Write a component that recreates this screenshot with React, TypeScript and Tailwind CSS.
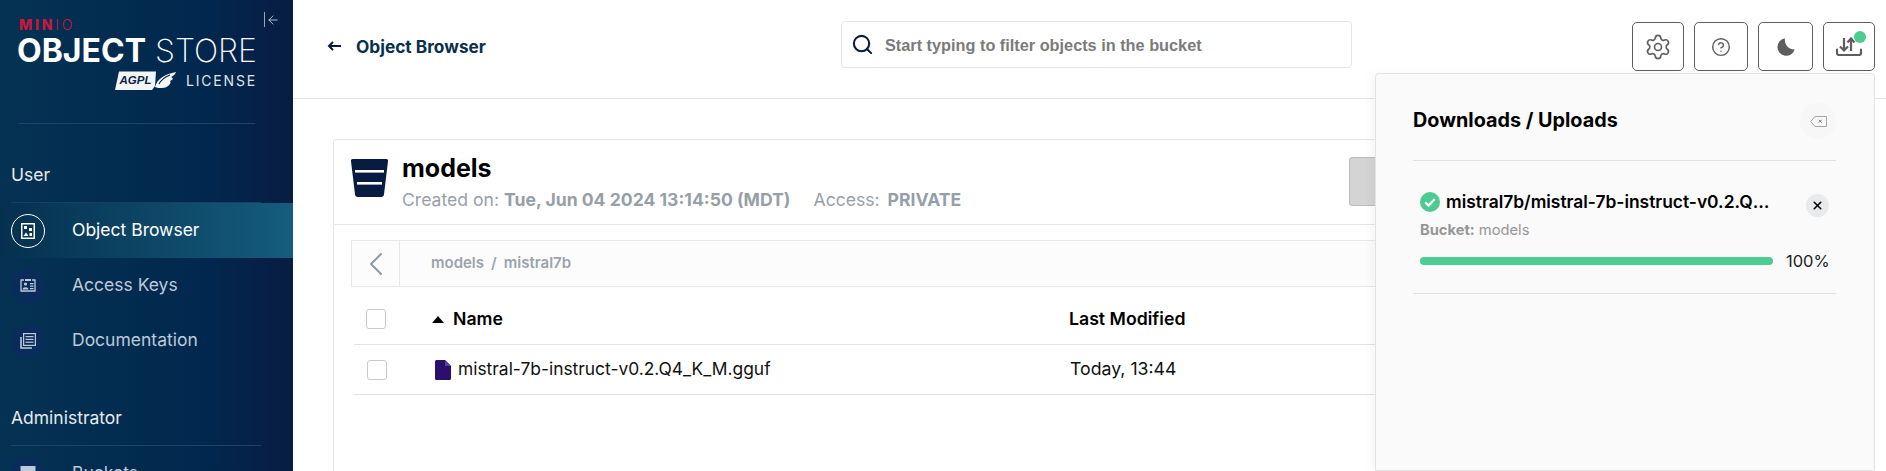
import { ChevronLeft, CircleHelp, ArrowLeft, Search, Settings, X } from "lucide-react"
import type { ReactNode } from "react"

const ObjectBrowserIcon = () => (
  <svg width="14" height="16" viewBox="0 0 14 16" fill="none">
    <rect x="0.75" y="0.75" width="12.5" height="14.5" stroke="currentColor" strokeWidth="1.5" />
    <rect x="3" y="3" width="3" height="3" fill="currentColor" />
    <rect x="8" y="5" width="3" height="3" fill="currentColor" />
    <path d="M2.5 13 L5 9.5 L7.5 13 Z" fill="currentColor" />
    <rect x="8.5" y="10" width="2.5" height="3" fill="currentColor" />
  </svg>
)

const AccessKeysIcon = () => (
  <svg width="16" height="13" viewBox="0 0 16 13" fill="none">
    <path d="M4 1H1v11h14V1h-3" stroke="currentColor" strokeWidth="1.3" />
    <rect x="5" y="0" width="6" height="2" fill="currentColor" />
    <circle cx="5.5" cy="5" r="1.6" fill="currentColor" />
    <path d="M2.5 10.5c0-3 6-3 6 0z" fill="currentColor" />
    <rect x="10" y="4" width="3.5" height="1.3" fill="currentColor" />
    <rect x="10" y="6.5" width="3.5" height="1.3" fill="currentColor" />
    <rect x="10" y="9" width="3.5" height="1.3" fill="currentColor" />
  </svg>
)

const DocumentationIcon = () => (
  <svg width="16" height="16" viewBox="0 0 16 16" fill="none">
    <rect x="3.6" y="0.6" width="11.8" height="11.8" stroke="currentColor" strokeWidth="1.2" />
    <rect x="5.5" y="3" width="8" height="1.2" fill="currentColor" />
    <rect x="5.5" y="5.8" width="8" height="1.2" fill="currentColor" />
    <rect x="5.5" y="8.6" width="8" height="1.2" fill="currentColor" />
    <path d="M1 4v11h11" stroke="currentColor" strokeWidth="1.6" />
  </svg>
)

const BucketsIcon = () => (
  <svg width="16" height="16" viewBox="0 0 16 16" fill="currentColor">
    <path d="M0.5 0h15v5h-15zM2 7h12v9H2z" />
  </svg>
)

const BucketIcon = () => (
  <svg width="37" height="38" viewBox="0 0 37 38">
    <path
      d="M2 0h33a2 2 0 0 1 2 2.3l-4 33a3 3 0 0 1-3 2.7H7a3 3 0 0 1-3-2.700L0 2.300A2 2 0 0 1 2 0z"
      fill="#081c42"
    />
    <rect x="4" y="11" width="29" height="2.6" fill="#fff" />
    <rect x="6" y="23" width="25" height="2.6" fill="#fff" />
  </svg>
)

const FileIcon = () => (
  <svg width="16" height="20" viewBox="0 0 16 20">
    <path d="M1.500 0H10l6 6v12.500a1.500 1.500 0 0 1-1.500 1.500h-13A1.500 1.500 0 0 1 0 18.500V1.500A1.500 1.500 0 0 1 1.500 0z" fill="#2a0f6b" />
    <path d="M10 0l6 6h-6z" fill="#5a3ea8" />
  </svg>
)

const BackArrow = () => (
  <svg width="14" height="10" viewBox="0 0 14 10" fill="none" stroke="#081c42" strokeWidth="2">
    <path d="M14 5H2M6 1L2 5l4 4" />
  </svg>
)

const MoonIcon = () => (
  <svg width="18" height="18" viewBox="0 0 18 18">
    <path d="M8 0.300A8.800 8.800 0 1 0 17.700 11.500A9.500 9.500 0 0 1 8 0.300z" fill="#5e5e5e" />
  </svg>
)

const TransfersIcon = () => (
  <svg width="26" height="19" viewBox="0 0 26 19" fill="none" stroke="#5e5e5e" strokeWidth="2.200">
    <path d="M1 12.500v3.500a2 2 0 0 0 2 2h20a2 2 0 0 0 2-2v-3.500" strokeLinecap="round" />
    <path d="M8 1v12.500M4 9.500l4 4 4-4" />
    <path d="M15 14V1.500M11.500 5.500l3.500-4 3.500 4" />
  </svg>
)

const ClearIcon = () => (
  <svg width="17" height="11" viewBox="0 0 17 11" fill="none">
    <path d="M5 0.500h11.500v10H5L0.800 5.500z" stroke="#8f8f8f" strokeWidth="0.800" fill="none" />
    <path d="M8.800 3.800l2.800 2.800M11.600 3.800l-2.800 2.800" stroke="#666" strokeWidth="0.900" />
  </svg>
)

const CheckBadge = () => (
  <svg width="20" height="20" viewBox="0 0 20 20" className="shrink-0">
    <circle cx="10" cy="10" r="10" fill="#4ccb92" />
    <path d="M5.300 10.300l3.300 3.300 6.100-6.600" stroke="#fff" strokeWidth="2.200" fill="none" />
  </svg>
)

const AgplLogo = () => (
  <svg width="62" height="20" viewBox="0 0 62 20">
    <path d="M4 0.500H41L40 15 37 19H0z" fill="#f2f4f6" />
    <text x="4.500" y="12.500" fontFamily="Liberation Sans" fontSize="11.500" fontWeight="700" fontStyle="italic" fill="#0b2648">
      AGPL
    </text>
    <path d="M40 16C42 8 50 3 61 1 60 4 58 5 56 6 59 7 58 9 55 10 57 12 53 17 47 17 44 17 42 17 40 16z" fill="#f2f4f6" />
    <path d="M44 13C46 9 50 6 55 4" stroke="#0b2648" strokeWidth="1.200" fill="none" />
  </svg>
)

const NavItem = ({ label, icon, active }: { label: string; icon: ReactNode; active?: boolean }) => (
  <div
    className={`flex h-[55px] shrink-0 items-center pl-[11px] ${
      active ? "bg-gradient-to-r from-[#06304f] to-[#155c7d] text-white" : "text-[#bccada]"
    }`}
  >
    <div
      className={`flex h-[34px] w-[34px] items-center justify-center rounded-full ${
        active ? "border border-white" : "bg-[#0a2c5a]"
      }`}
    >
      {icon}
    </div>
    <span className="ml-[27px] text-[17.500px]">{label}</span>
  </div>
)

const Sidebar = () => (
  <aside className="flex h-full w-[293px] shrink-0 flex-col overflow-hidden bg-gradient-to-r from-[#053252] via-[#01274e] via-70% to-[#081c42] text-white">
    <div className="relative h-[123px] shrink-0 px-[17px] pt-[19px]">
      <div className="absolute top-[12px] left-[264px] flex items-center text-[#c7d2de]">
        <div className="h-[15px] w-[1px] bg-[#9aa7b5]" />
        <ArrowLeft size={14} strokeWidth={1.500} className="ml-[1px]" />
      </div>
      <div className="flex h-[12px] items-center pl-[2px] text-[14px] leading-none font-extrabold tracking-[0.200em] text-[#c8183f]">
        MIN<span className="font-light">IO</span>
      </div>
      <div className="mt-[7px] flex h-[26px] items-center text-[32px] leading-none whitespace-nowrap">
        <span className="font-bold">OBJECT</span>
        <span className="ml-[9px] font-extralight">STORE</span>
      </div>
      <div className="mt-[6px] flex h-[21px] items-center justify-end pr-[19px]">
        <div className="mr-[9px] flex">
          <AgplLogo />
        </div>
        <span className="text-[14px] leading-none tracking-[0.130em] text-[#dfe5ec]">LICENSE</span>
      </div>
    </div>
    <div className="ml-[18px] h-[1px] w-[237px] shrink-0 bg-[#1d4468]" />
    <div className="shrink-0 px-[11px] pt-[40px] pb-[16px] text-[17.500px] leading-[22px] text-[#e5eaf0]">User</div>
    <div className="ml-[11px] h-[1px] w-[250px] shrink-0 bg-[#12406a]" />
    <NavItem label="Object Browser" active icon={<ObjectBrowserIcon />} />
    <NavItem label="Access Keys" icon={<AccessKeysIcon />} />
    <NavItem label="Documentation" icon={<DocumentationIcon />} />
    <div className="shrink-0 px-[11px] pt-[39px] pb-[16px] text-[17.500px] leading-[22px] text-[#e5eaf0]">Administrator</div>
    <div className="ml-[11px] h-[1px] w-[250px] shrink-0 bg-[#1d4468]" />
    <NavItem label="Buckets" icon={<BucketsIcon />} />
  </aside>
)

const HeaderButton = ({ width, children }: { width: string; children: ReactNode }) => (
  <button className={`flex h-[49px] ${width} items-center justify-center rounded-[5px] border border-[#5e5e5e] text-[#5e5e5e]`}>
    {children}
  </button>
)

const Checkbox = () => <div className="h-[20px] w-[20px] rounded-[3px] border border-[#c9c9c9] bg-white" />

const Header = () => (
  <header className="flex h-[99px] shrink-0 items-start border-b border-[#e4e4e4] bg-white">
    <div className="flex h-[92px] w-[548px] items-center pl-[34px]">
      <BackArrow />
      <span className="mt-[1px] ml-[15px] text-[17.300px] font-bold text-[#07304f]">Object Browser</span>
    </div>
    <div className="mt-[21px] flex h-[47px] w-[511px] items-center rounded-[4px] border border-[#e5e5e5] pl-[9px]">
      <Search size={23} strokeWidth={2.200} className="text-[#081c42]" />
      <span className="mt-[1px] ml-[11px] font-['Liberation_Sans'] text-[16.300px] font-bold text-[#7b7b7b]">
        Start typing to filter objects in the bucket
      </span>
    </div>
    <div className="mt-[22px] ml-[280px] flex gap-[10px]">
      <HeaderButton width="w-[52px]">
        <Settings size={28} strokeWidth={1.400} />
      </HeaderButton>
      <HeaderButton width="w-[54px]">
        <CircleHelp size={20} strokeWidth={1.700} />
      </HeaderButton>
      <HeaderButton width="w-[55px]">
        <MoonIcon />
      </HeaderButton>
      <HeaderButton width="w-[52px]">
        <div className="relative">
          <TransfersIcon />
          <div className="absolute -top-[6px] -right-[4px] h-[12px] w-[12px] rounded-full bg-[#4ccb92]" />
        </div>
      </HeaderButton>
    </div>
  </header>
)

const BucketCard = () => (
  <div className="flex h-[86px] items-start rounded-t-[3px] border border-[#e5e5e5] pt-[19px] pl-[17px]">
    <BucketIcon />
    <div className="-mt-[8px] ml-[14px]">
      <div className="text-[25px] leading-[34px] font-bold text-black">models</div>
      <div className="mt-[3px] flex text-[17.600px] leading-[24px] whitespace-nowrap text-[#969fa8]">
        <span>
          Created on: <span className="font-bold">Tue, Jun 04 2024 13:14:50 (MDT)</span>
        </span>
        <span className="ml-[23px]">
          Access: <span className="ml-[3px] font-bold">PRIVATE</span>
        </span>
      </div>
    </div>
    <div className="mt-[-2px] mr-[16px] ml-auto h-[49px] w-[480px] rounded-[3px] border border-[#bcbcbc] bg-[#d3d4d3]" />
  </div>
)

const ObjectTable = () => (
  <div className="flex-1 border-x border-[#e5e5e5] pt-[15px] pl-[17px]">
    <div className="flex h-[47px] border border-[#e8e8e8] bg-[#fcfcfd]">
      <div className="flex w-[48px] items-center justify-center border-r border-[#e8e8e8] text-[#8f9aa6]">
        <ChevronLeft size={40} strokeWidth={1.200} />
      </div>
      <div className="ml-[31px] flex items-center text-[15px] font-semibold text-[#9aa3ae]">
        models<span className="mx-[7px]">/</span>mistral7b
      </div>
    </div>
    <div className="ml-[3px] flex h-[58px] items-center border-b border-[#e2e2e2] pt-[7px] text-[17.700px] font-semibold text-black">
      <div className="ml-[12px]">
        <Checkbox />
      </div>
      <div className="ml-[46px] h-0 w-0 border-x-[6.500px] border-b-[7px] border-x-transparent border-b-black" />
      <span className="ml-[9px] w-[616px]">Name</span>
      <span>Last Modified</span>
    </div>
    <div className="ml-[3px] flex h-[50px] items-center border-b border-[#e2e2e2] text-[17.400px] text-[#111]">
      <div className="ml-[13px]">
        <Checkbox />
      </div>
      <div className="ml-[48px] flex">
        <FileIcon />
      </div>
      <span className="ml-[7px] w-[612px]">mistral-7b-instruct-v0.2.Q4_K_M.gguf</span>
      <span className="text-[17.700px]">Today, 13:44</span>
    </div>
  </div>
)

const TransfersPanel = () => (
  <div className="absolute top-[73px] right-[11px] bottom-0 w-[500px] rounded-t-[4px] border border-[#e3e3e3] bg-[#fafafa] pr-[38px] pl-[37px] shadow-[-4px_0_10px_rgba(0,0,0,0.040)]">
    <div className="flex h-[87px] items-start justify-between border-b border-[#e2e2e2] pt-[32px]">
      <span className="mt-[1px] text-[19.800px] leading-[26px] font-bold text-black">Downloads / Uploads</span>
      <div className="-mt-[3px] flex h-[36px] w-[36px] items-center justify-center rounded-full bg-[#f7f7f7]">
        <ClearIcon />
      </div>
    </div>
    <div className="h-[133px] border-b border-[#e2e2e2] pt-[29px] pl-[7px]">
      <div className="flex h-[24px] items-center">
        <CheckBadge />
        <span className="ml-[6px] w-[331px] truncate text-[17.400px] leading-[24px] font-semibold text-black">
          mistral7b/mistral-7b-instruct-v0.2.Q4_K_M.gguf
        </span>
        <div className="ml-[29px] flex h-[23px] w-[23px] translate-y-[3px] items-center justify-center rounded-full bg-[#e8eaec]">
          <X size={13} strokeWidth={3} className="text-black" />
        </div>
      </div>
      <div className="mt-[6px] text-[14.700px] leading-[20px] text-[#969696]">
        <span className="font-bold">Bucket:</span> models
      </div>
      <div className="mt-[11px] flex items-center">
        <div className="h-[8px] w-[353px] rounded-full bg-[#4ccb92]" />
        <span className="ml-[13px] text-[16.500px] leading-[20px] text-[#222]">100%</span>
      </div>
    </div>
  </div>
)

export default function App() {
  return (
    <div className="relative flex h-[471px] w-[1886px] overflow-hidden bg-white font-['Inter',sans-serif]">
      <Sidebar />
      <main className="flex min-w-0 flex-1 flex-col">
        <Header />
        <div className="flex flex-1 flex-col pt-[40px] pr-[40px] pl-[40px]">
          <BucketCard />
          <ObjectTable />
        </div>
      </main>
      <TransfersPanel />
    </div>
  )
}
